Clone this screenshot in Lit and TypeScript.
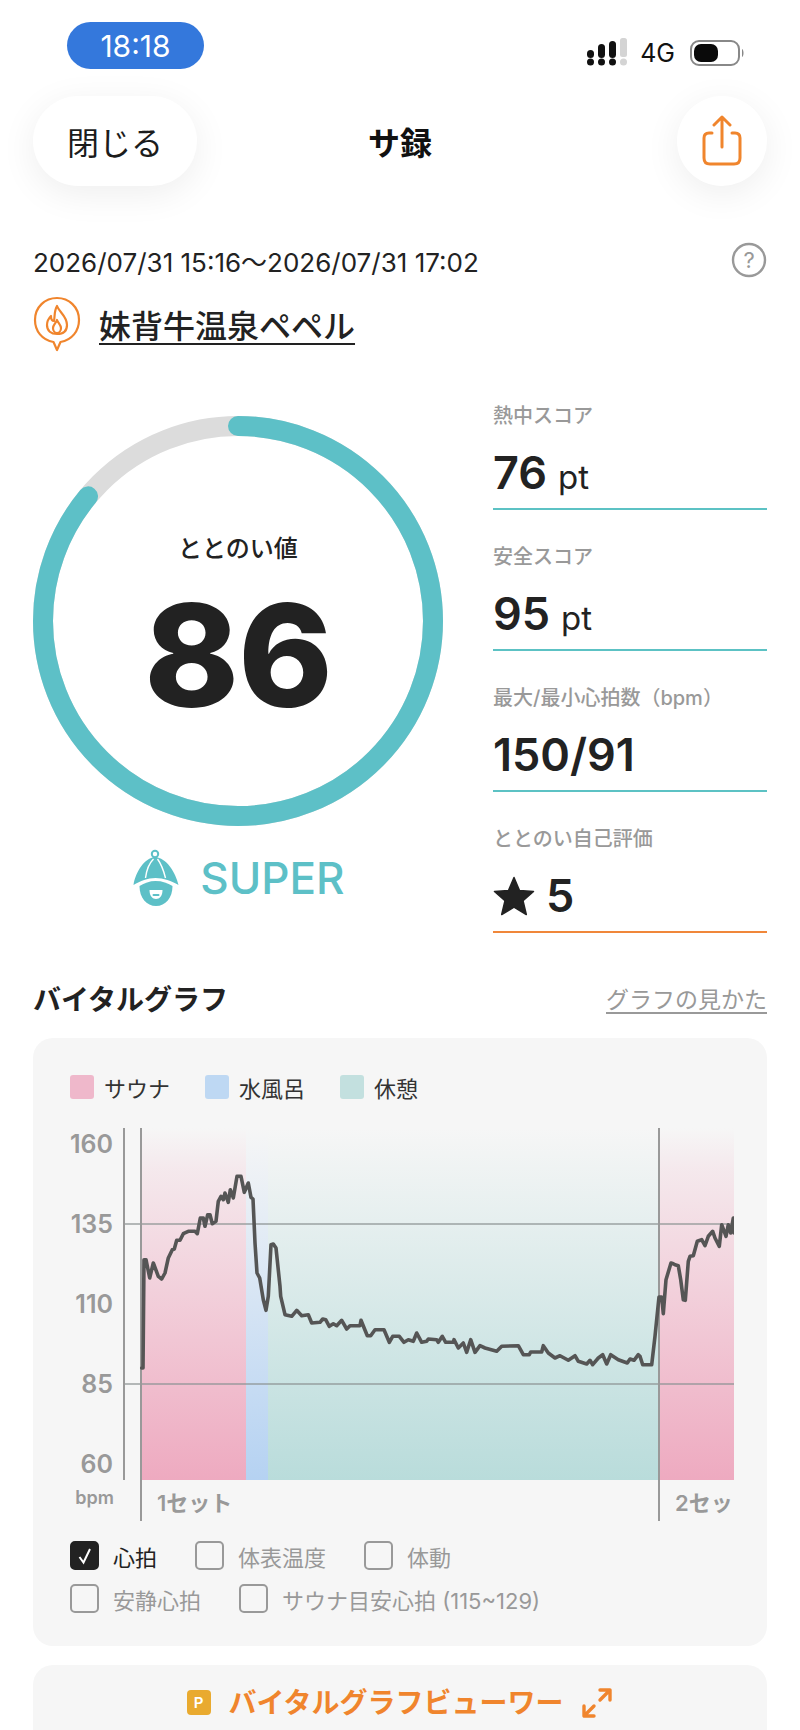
import { LitElement, html, css, svg } from "lit";
import { customElement } from "lit/decorators.js";

type P = [number, number];
const seg = (ox: number, oy: number, pts: P[]): P[] => pts.map(([x, y]) => [ox + x / 3, oy + y / 3] as P);

const line: P[] = [
  ...seg(135, 1170, [[20,615],[24,615],[27,290],[33,290],[44,345],[55,300],[70,340],[80,348],[90,330],[100,285],[112,260],[118,258],[125,232],[135,232],[145,212],[160,205],[180,205],[187,212],[196,165],[205,165],[210,190],[218,155],[225,155],[232,182],[243,175],[250,115],[258,100],[265,110],[270,90],[280,118],[286,80],[295,105],[306,40],[318,40],[328,88],[340,60],[348,103],[354,108],[360,240],[366,330],[374,345],[385,410],[393,442],[400,400],[408,245],[415,243],[423,255],[435,370]]),
  ...seg(280, 1290, [[2,40],[15,95],[35,100],[50,82],[65,98],[85,95],[95,120],[120,118],[128,108],[137,110],[148,130],[160,122],[170,128],[185,112],[200,138],[210,128],[240,128],[243,112],[262,158],[272,158],[285,140],[312,140],[328,178],[338,160],[358,160],[372,178],[385,170],[400,175],[410,150],[425,178],[440,175],[445,168],[470,170],[475,178],[487,160],[497,178],[520,178],[522,170],[535,195],[550,180],[560,208],[572,170],[585,208],[600,188],[615,195]]),
  ...seg(490, 1310, [[20,145],[35,130],[85,128],[100,155],[118,155],[122,147],[155,147],[160,128],[175,150],[195,165],[210,158],[235,172],[255,158],[265,175],[290,183],[300,172],[308,185],[325,165],[338,155],[350,183],[362,155],[385,170],[412,180],[420,168],[432,172],[445,155]]),
  ...seg(640, 1200, [[0,490],[8,515],[35,515],[45,430],[57,312],[65,312],[70,362],[78,260],[93,210],[100,212],[105,215],[115,218],[122,260],[130,320],[136,322],[145,205],[150,190],[160,188],[172,145],[185,140],[195,158],[205,130],[218,115],[225,135],[238,160],[245,95],[258,130],[265,95],[272,120],[280,75],[282,120]]),
];
const linePts = line.map(([x, y]) => `${x.toFixed(1)},${y.toFixed(1)}`).join(" ");

const yLabels: [string, number][] = [["160", 1151], ["135", 1231], ["110", 1311], ["85", 1391], ["60", 1471]];

@customElement("app-root")
export class AppRoot extends LitElement {
  static styles = css`
    :host {
      display: block;
      width: 800px;
      height: 1730px;
      overflow: hidden;
      background: #fff;
      color: #222;
      font-family: "Inter", "Noto Sans CJK JP", sans-serif;
    }
    .status { display: flex; justify-content: space-between; height: 96px; padding: 22px 55px 0 67px; box-sizing: border-box; }
    .pill { width: 137px; height: 47px; border-radius: 24px; background: #3478dc; color: #fff; font-size: 30px; display: flex; align-items: center; justify-content: center; }
    .sys { display: flex; align-items: center; height: 30px; margin-top: 16px; }
    .four { font-size: 25px; margin: 0 15px 0 13px; color: #111; }
    .head { display: grid; grid-template-columns: 1fr auto 1fr; align-items: center; padding: 0 33px; }
    .close { justify-self: start; width: 164px; height: 90px; border-radius: 45px; background: #fff; box-shadow: 0 8px 36px rgba(0,0,0,.07); font-size: 32px; display: flex; align-items: center; justify-content: center; color: #1c1c1c; }
    .title { font-size: 32px; font-weight: 700; color: #111; }
    .share { justify-self: end; width: 90px; height: 90px; border-radius: 50%; background: #fff; box-shadow: 0 8px 36px rgba(0,0,0,.07); display: flex; align-items: center; justify-content: center; }
    .date { display: flex; justify-content: space-between; align-items: center; padding: 56px 33px 0; height: 36px; font-size: 26px; color: #222; }
    .gym { display: flex; align-items: center; gap: 18px; margin: 18px 33px 0; height: 56px; }
    .gym-name { font-size: 32px; font-weight: 500; text-decoration: underline; text-underline-offset: 5px; text-decoration-thickness: 2px; }
    .score { display: flex; padding: 17px 33px 0; }
    .left { width: 410px; padding-top: 47px; }
    .ring { display: grid; width: 410px; height: 410px; }
    .ring > * { grid-area: 1 / 1; }
    .ring-in { display: flex; flex-direction: column; align-items: center; }
    .ring-lab { font-size: 24px; font-weight: 500; margin-top: 118px; line-height: 30px; }
    .ring-num { font-size: 143px; font-weight: 800; line-height: 140px; margin-top: 21px; letter-spacing: -1px; }
    .rank { display: flex; justify-content: center; align-items: center; gap: 19px; margin-top: 22px; color: #5dc0c7; font-size: 44px; font-weight: 500; line-height: 60px; }
    .stats { width: 274px; margin-left: 50px; }
    .stat { height: 141px; box-sizing: border-box; padding-top: 34px; border-bottom: 2px solid #5cc2c4; }
    .stat.o { border-bottom-color: #f0873a; }
    .stat-l { font-size: 20px; line-height: 26px; font-weight: 500; color: #999; }
    .stat-v { font-size: 45px; line-height: 52px; font-weight: 600; margin-top: 18px; display: flex; align-items: baseline; gap: 11px; }
    .stat-v small { font-size: 33px; font-weight: 400; }
    .sec { display: flex; justify-content: space-between; align-items: center; margin-top: 38px; padding: 0 33px; height: 54px; }
    .sec-t { font-size: 28px; font-weight: 700; }
    .sec-l { font-size: 23px; color: #999; text-decoration: underline; text-underline-offset: 4px; }
    .card { margin: 0 33px; border-radius: 20px; background: #f6f6f6; }
    .graph { margin-top: 13px; padding: 37px 33px 33px 37px; }
    .legend { display: flex; align-items: center; height: 24px; font-size: 22px; color: #333; }
    .sw { width: 24px; height: 24px; border-radius: 3px; margin-right: 10px; }
    .legend span.t { margin-right: 35px; }
    svg { display: block; }
    .plot { margin-top: 29px; }
    .checks { margin-top: 20px; display: flex; flex-direction: column; gap: 14px; }
    .row { display: flex; gap: 38px; }
    .ck { display: flex; align-items: center; gap: 14px; font-size: 22px; color: #999; height: 29px; }
    .ck.on { color: #222; }
    .box { width: 29px; height: 29px; box-sizing: border-box; border: 2px solid #999; border-radius: 5px; display: flex; align-items: center; justify-content: center; }
    .ck.on .box { background: #222; border-color: #222; }
    .viewer { margin-top: 19px; height: 120px; padding-top: 22px; box-sizing: border-box; display: flex; justify-content: center; align-items: flex-start; gap: 18px; color: #f0852d; font-size: 28px; font-weight: 700; }
    .viewer .t { line-height: 32px; }
    .p { width: 24px; height: 25px; margin-top: 3px; border-radius: 4px; background: #e9aa2f; color: #fff; font-size: 15px; font-weight: 600; display: flex; align-items: center; justify-content: center; }
    .plot text { font-family: "Inter", "Noto Sans CJK JP", sans-serif; fill: #999; font-weight: 600; }
  `;

  private signal() {
    return html`<svg width="40" height="30" viewBox="0 0 40 30" fill="#111">
      <circle cx="3.5" cy="24" r="3.5"/><circle cx="14.5" cy="24" r="3.5"/><circle cx="25.5" cy="24" r="3.5"/>
      <rect x="0" y="12" width="7" height="8" rx="3.5"/>
      <rect x="11" y="6" width="7" height="14" rx="3.5"/>
      <rect x="22" y="3" width="7" height="17" rx="3.5"/>
      <rect x="33" y="0" width="7" height="19" rx="2.5" fill="#d4d4d4"/>
      <circle cx="36.5" cy="24" r="3.5" fill="#d4d4d4"/>
    </svg>`;
  }

  private battery() {
    return html`<svg width="55" height="26" viewBox="0 0 55 26">
      <rect x="1" y="1" width="48" height="24" rx="8" fill="none" stroke="#888" stroke-width="2"/>
      <rect x="4" y="4" width="24" height="18" rx="7" fill="#0a0a0a"/>
      <path d="M52 9c2 1 2 7 0 8z" fill="#888"/>
    </svg>`;
  }

  private hat() {
    return html`<svg width="50" height="58" viewBox="14.5 15 50 58" fill="#5dc0c7">
      <circle cx="38.5" cy="20" r="3.2" fill="none" stroke="#5dc0c7" stroke-width="2"/>
      <path d="M17 51C19 38 28 24 38.5 23C50 24 59 38 62 51C55 47 47 44 39 44C31 44 24 47 17 51Z"/>
      <path d="M29 44C30 36 33 29 37 25M49 44C47 36 44 29 41 25" fill="none" stroke="#fff" stroke-width="1.4"/>
      <path d="M23 52C28 49 33 47 39 47C46 47 51 49 56 52C56 64 49 72 39.5 72C30 72 23 64 23 52Z"/>
      <path d="M33 56H46C46 62 43 65 39.5 65C36 65 33 62 33 56Z" fill="#fff"/>
      <rect x="36" y="60" width="7" height="2" rx="1"/>
    </svg>`;
  }

  private plot() {
    const bandTop = 1135, h = 352;
    return html`<svg class="plot" width="664" height="393" viewBox="70 1135 664 393">
      <defs>
        <linearGradient id="gp" x1="0" y1="0" x2="0" y2="1"><stop offset="0" stop-color="#eeaac0" stop-opacity="0"/><stop offset=".12" stop-color="#eeaac0" stop-opacity=".18"/><stop offset="1" stop-color="#eeaac0"/></linearGradient>
        <linearGradient id="gb" x1="0" y1="0" x2="0" y2="1"><stop offset="0" stop-color="#b5d2f2" stop-opacity="0"/><stop offset="1" stop-color="#b5d2f2"/></linearGradient>
        <linearGradient id="gt" x1="0" y1="0" x2="0" y2="1"><stop offset="0" stop-color="#b9dcdb" stop-opacity="0"/><stop offset="1" stop-color="#b9dcdb"/></linearGradient>
      </defs>
      <rect x="142" y=${bandTop} width="104" height=${h} fill="url(#gp)"/>
      <rect x="246" y=${bandTop} width="22" height=${h} fill="url(#gb)"/>
      <rect x="268" y=${bandTop} width="391" height=${h} fill="url(#gt)"/>
      <rect x="660" y=${bandTop} width="74" height=${h} fill="url(#gp)"/>
      ${[1231, 1391].map((y) => svg`<line x1="124" x2="734" y1=${y} y2=${y} stroke="#8e9494" stroke-width="1.6" opacity=".85"/>`)}
      <line x1="124" x2="124" y1="1135" y2="1487" stroke="#999" stroke-width="2"/>
      <line x1="141" x2="141" y1="1135" y2="1528" stroke="#999" stroke-width="2"/>
      <line x1="659" x2="659" y1="1135" y2="1528" stroke="#999" stroke-width="2"/>
      <polyline points=${linePts} fill="none" stroke="#555" stroke-width="3.6" stroke-linejoin="round" stroke-linecap="round"/>
      ${yLabels.map(([t, y]) => svg`<text x="113" y=${y + 9} text-anchor="end" font-size="25">${t}</text>`)}
      <text x="114" y="1511" text-anchor="end" font-size="18">bpm</text>
      <text x="157" y="1518" font-size="22">1セット</text>
      <text x="675" y="1518" font-size="22">2セット</text>
    </svg>`;
  }

  private ck(label: string, on = false) {
    return html`<div class="ck ${on ? "on" : ""}">
      <div class="box">${on ? html`<svg width="16" height="20" viewBox="0 0 16 20"><path d="M2.5 11L6.5 16.5L13 3" fill="none" stroke="#fff" stroke-width="2"/></svg>` : ""}</div>
      <span>${label}</span>
    </div>`;
  }

  render() {
    const C = 2 * Math.PI * 195;
    return html`
      <div class="status">
        <div class="pill">18:18</div>
        <div class="sys">${this.signal()}<span class="four">4G</span>${this.battery()}</div>
      </div>
      <div class="head">
        <div class="close">閉じる</div>
        <div class="title">サ録</div>
        <div class="share">
          <svg width="42" height="52" viewBox="0 0 42 52" fill="none" stroke="#f0852d" stroke-width="3" stroke-linecap="round" stroke-linejoin="round">
            <path d="M11 18H8C4.5 18 3 20 3 23V43C3 47 5 49 9 49H33C37 49 39 47 39 43V23C39 20 37.500 18 34 18H31"/>
            <path d="M21 32V2M13 10L21 2L29 10"/>
          </svg>
        </div>
      </div>
      <div class="date">
        <span>2026/07/31 15:16～2026/07/31 17:02</span>
        <svg width="36" height="36" viewBox="0 0 36 36"><circle cx="18" cy="18" r="16" fill="none" stroke="#999" stroke-width="2.4"/><text x="18" y="26" text-anchor="middle" font-size="22" fill="#999" font-family="Inter">?</text></svg>
      </div>
      <div class="gym">
        <svg width="48" height="56" viewBox="0 0 48 56" fill="none" stroke="#f0852d" stroke-width="2.2" stroke-linejoin="round" stroke-linecap="round">
          <path d="M24 54L20.500 46C9 44 2 35 2 24C2 11 12 2 24 2C36 2 46 11 46 24C46 35 39 44 27.500 46Z"/>
          <path d="M24 10C26 16 34 20 34 29C34 35 30 38 24 38C18 38 14 35 14 29C14 25 16 22 18 20C18 23 19 25 21 25C22 20 21 15 24 10Z"/>
          <path d="M24 24C25 27 28 29 28 32C28 35 26 37 24 37C22 37 20 35 20 32C20 29 23 27 24 24Z"/>
        </svg>
        <span class="gym-name">妹背牛温泉ペペル</span>
      </div>
      <div class="score">
        <div class="left">
          <div class="ring">
            <svg width="410" height="410" viewBox="0 0 410 410">
              <circle cx="205" cy="205" r="195" fill="none" stroke="#dcdcdc" stroke-width="20"/>
              <circle cx="205" cy="205" r="195" fill="none" stroke="#5dc0c7" stroke-width="20" stroke-linecap="round" stroke-dasharray=${`${C * 0.86} ${C}`} transform="rotate(-90 205 205)"/>
            </svg>
            <div class="ring-in">
              <div class="ring-lab">ととのい値</div>
              <div class="ring-num">86</div>
            </div>
          </div>
          <div class="rank">${this.hat()}<span>SUPER</span></div>
        </div>
        <div class="stats">
          <div class="stat"><div class="stat-l">熱中スコア</div><div class="stat-v">76<small>pt</small></div></div>
          <div class="stat"><div class="stat-l">安全スコア</div><div class="stat-v">95<small>pt</small></div></div>
          <div class="stat"><div class="stat-l">最大/最小心拍数（bpm）</div><div class="stat-v">150/91</div></div>
          <div class="stat o"><div class="stat-l">ととのい自己評価</div><div class="stat-v">
            <svg width="42" height="40" viewBox="0 0 42 40" style="align-self:center"><path d="M21 1.500L26.500 14.500L40.500 15.500L30 24.800L33.300 38.500L21 31.200L8.700 38.500L12 24.800L1.500 15.500L15.500 14.500Z" fill="#222" stroke="#222" stroke-width="1.500" stroke-linejoin="round"/></svg>5</div></div>
        </div>
      </div>
      <div class="sec"><span class="sec-t">バイタルグラフ</span><span class="sec-l">グラフの見かた</span></div>
      <div class="card graph">
        <div class="legend">
          <span class="sw" style="background:#efb8cb"></span><span class="t">サウナ</span>
          <span class="sw" style="background:#bed8f3"></span><span class="t">水風呂</span>
          <span class="sw" style="background:#c3e0df"></span><span class="t">休憩</span>
        </div>
        ${this.plot()}
        <div class="checks">
          <div class="row">${this.ck("心拍", true)}${this.ck("体表温度")}${this.ck("体動")}</div>
          <div class="row">${this.ck("安静心拍")}${this.ck("サウナ目安心拍 (115~129)")}</div>
        </div>
      </div>
      <div class="card viewer">
        <div class="p">P</div>
        <span class="t">バイタルグラフビューワー</span>
        <svg width="32" height="32" viewBox="0 0 32 32" fill="none" stroke="#f0852d" stroke-width="3.4" stroke-linecap="round" stroke-linejoin="round">
          <path d="M19 13L29 3M19 3H29V13M13 19L3 29M3 19V29H13"/>
        </svg>
      </div>
    `;
  }
}
